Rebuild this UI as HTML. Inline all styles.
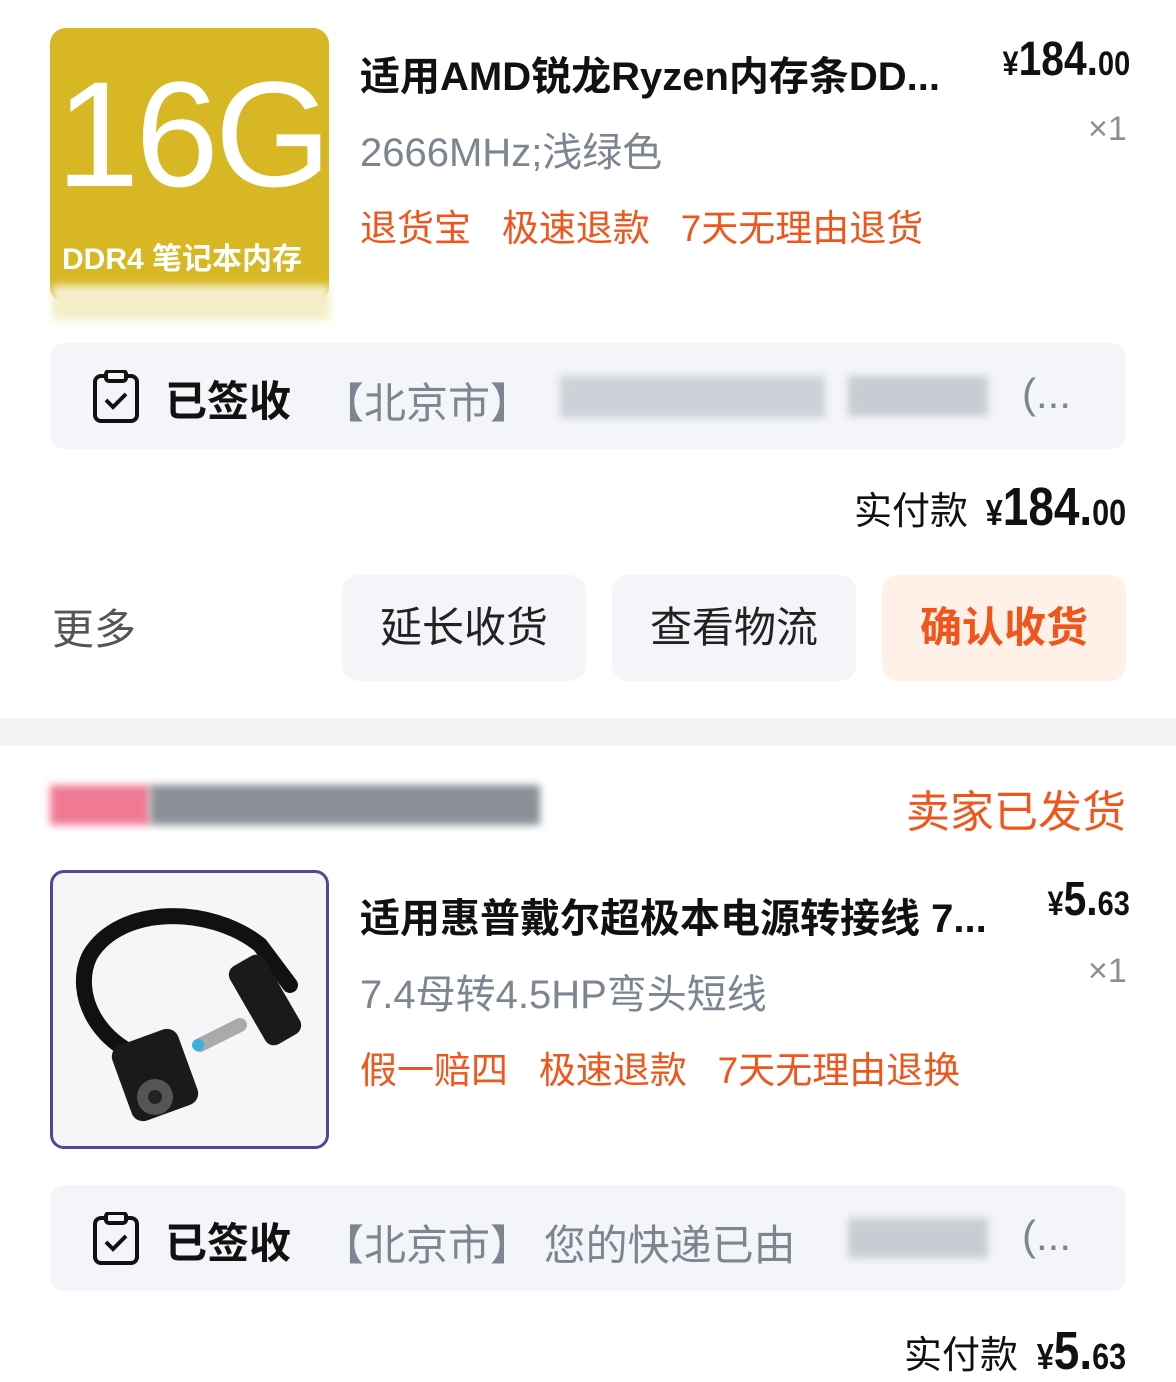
<!DOCTYPE html>
<html><head><meta charset="utf-8"><style>
body{margin:0;width:1176px;height:1371px;overflow:hidden;background:#fff;font-family:"Liberation Sans","Noto Sans CJK SC",sans-serif;position:relative}
.a{position:absolute;white-space:nowrap}
.t{font-size:40px;font-weight:bold;color:#111}
.g{font-size:40px;color:#7d8591}
.o{font-size:37px;color:#f0561c}
.p{font-weight:bold;color:#111}
.bar{position:absolute;left:50px;width:1076px;height:106px;background:#f3f5f8;border-radius:14px}
.btn{position:absolute;top:575px;width:244px;height:106px;border-radius:16px;background:#f3f5f8;font-size:42px;color:#222;text-align:center;line-height:106px}
.blur{position:absolute;filter:blur(4px)}
.pr{position:absolute;white-space:nowrap;font-weight:bold;color:#111;transform:scaleX(.85);transform-origin:right top;text-align:right}
</style></head><body>
<div class="a" style="left:50px;top:28px;width:279px;height:275px;background:#d8b724;border-radius:16px;overflow:hidden">
 <div class="a" style="left:6px;top:20px;font-size:150px;color:#fff;letter-spacing:-4px">16G</div>
 <div class="a" style="left:12px;top:206px;font-size:30px;color:#fff;font-weight:bold">DDR4 笔记本内存</div>
</div>
<div class="blur" style="left:52px;top:285px;width:278px;height:35px;background:#f3eec8"></div>
<div class="a t" style="left:360px;top:44px">适用AMD锐龙Ryzen内存条DD...</div>
<div class="pr" style="right:46px;top:32px;font-size:48px"><span style="font-size:34px">¥</span>184.<span style="font-size:34px">00</span></div>
<div class="a" style="left:1088px;top:110px;font-size:34px;color:#8a8f98">×1</div>
<div class="a g" style="left:360px;top:120px">2666MHz;浅绿色</div>
<div class="a o" style="left:360px;top:198px">退货宝&nbsp;&nbsp;&nbsp;极速退款&nbsp;&nbsp;&nbsp;7天无理由退货</div>

<div class="bar" style="top:343px"></div>
<svg class="a" style="left:92px;top:370px" width="48" height="54" viewBox="0 0 48 54"><rect x="3" y="6" width="42" height="45" rx="6" fill="none" stroke="#111" stroke-width="4"/><rect x="14" y="1" width="20" height="10" rx="3" fill="#f3f5f8" stroke="#111" stroke-width="4"/><path d="M14 30l7 7 13-13" fill="none" stroke="#111" stroke-width="4"/></svg>
<div class="a p" style="left:165px;top:368px;font-size:42px">已签收</div>
<div class="a g" style="left:322px;top:370px;font-size:42px">【北京市】</div>
<div class="blur" style="left:560px;top:376px;width:265px;height:42px;background:#cdd1d8"></div>
<div class="blur" style="left:848px;top:376px;width:140px;height:40px;background:#c8ccd3"></div>
<div class="a g" style="left:1022px;top:370px;font-size:42px">(...</div>

<div class="a" style="left:854px;top:480px;font-size:38px;color:#111">实付款</div>
<div class="pr" style="right:50px;top:476px;font-size:54px"><span style="font-size:36px">¥</span>184.<span style="font-size:36px">00</span></div>

<div class="a" style="left:52px;top:596px;font-size:42px;color:#555">更多</div>
<div class="btn" style="left:342px">延长收货</div>
<div class="btn" style="left:612px">查看物流</div>
<div class="btn" style="left:882px;background:#fff0e8;color:#f0561c;font-weight:bold">确认收货</div>

<div class="a" style="left:0;top:718px;width:1176px;height:28px;background:#f2f3f5"></div>

<div class="blur" style="left:50px;top:785px;width:100px;height:40px;background:#f07a94"></div>
<div class="blur" style="left:150px;top:785px;width:390px;height:40px;background:#8a8f98"></div>
<div class="a o" style="left:906px;top:776px;font-size:44px">卖家已发货</div>

<div class="a" style="left:50px;top:870px;width:273px;height:273px;border:3px solid #4c4a96;border-radius:14px;background:#f6f6f8"></div>
<svg class="a" style="left:60px;top:885px" width="260" height="250" viewBox="0 0 260 250"><path d="M110 180C40 170 10 110 30 70C60 20 150 20 200 60L230 100" fill="none" stroke="#111" stroke-width="16" stroke-linecap="round"/><rect x="185" y="70" width="40" height="90" rx="10" fill="#1a1a1a" transform="rotate(-30 205 115)"/><path d="M180 140L140 160" stroke="#aaa" stroke-width="14" stroke-linecap="round"/><circle cx="138" cy="160" r="6" fill="#3ab0dc"/><rect x="60" y="150" width="70" height="80" rx="12" fill="#1a1a1a" transform="rotate(-20 95 190)"/><circle cx="95" cy="212" r="18" fill="#555"/><circle cx="95" cy="212" r="7" fill="#222"/></svg>

<div class="a t" style="left:360px;top:886px">适用惠普戴尔超极本电源转接线 7...</div>
<div class="pr" style="right:46px;top:872px;font-size:48px"><span style="font-size:34px">¥</span>5.<span style="font-size:34px">63</span></div>
<div class="a" style="left:1088px;top:952px;font-size:34px;color:#8a8f98">×1</div>
<div class="a g" style="left:360px;top:962px">7.4母转4.5HP弯头短线</div>
<div class="a o" style="left:360px;top:1040px">假一赔四&nbsp;&nbsp;&nbsp;极速退款&nbsp;&nbsp;&nbsp;7天无理由退换</div>

<div class="bar" style="top:1185px"></div>
<svg class="a" style="left:92px;top:1212px" width="48" height="54" viewBox="0 0 48 54"><rect x="3" y="6" width="42" height="45" rx="6" fill="none" stroke="#111" stroke-width="4"/><rect x="14" y="1" width="20" height="10" rx="3" fill="#f3f5f8" stroke="#111" stroke-width="4"/><path d="M14 30l7 7 13-13" fill="none" stroke="#111" stroke-width="4"/></svg>
<div class="a p" style="left:165px;top:1210px;font-size:42px">已签收</div>
<div class="a g" style="left:322px;top:1212px;font-size:42px">【北京市】 您的快递已由</div>
<div class="blur" style="left:848px;top:1218px;width:140px;height:40px;background:#c8ccd3"></div>
<div class="a g" style="left:1022px;top:1212px;font-size:42px">(...</div>

<div class="a" style="left:904px;top:1324px;font-size:38px;color:#111">实付款</div>
<div class="pr" style="right:50px;top:1320px;font-size:54px"><span style="font-size:36px">¥</span>5.<span style="font-size:36px">63</span></div>
</body></html>
